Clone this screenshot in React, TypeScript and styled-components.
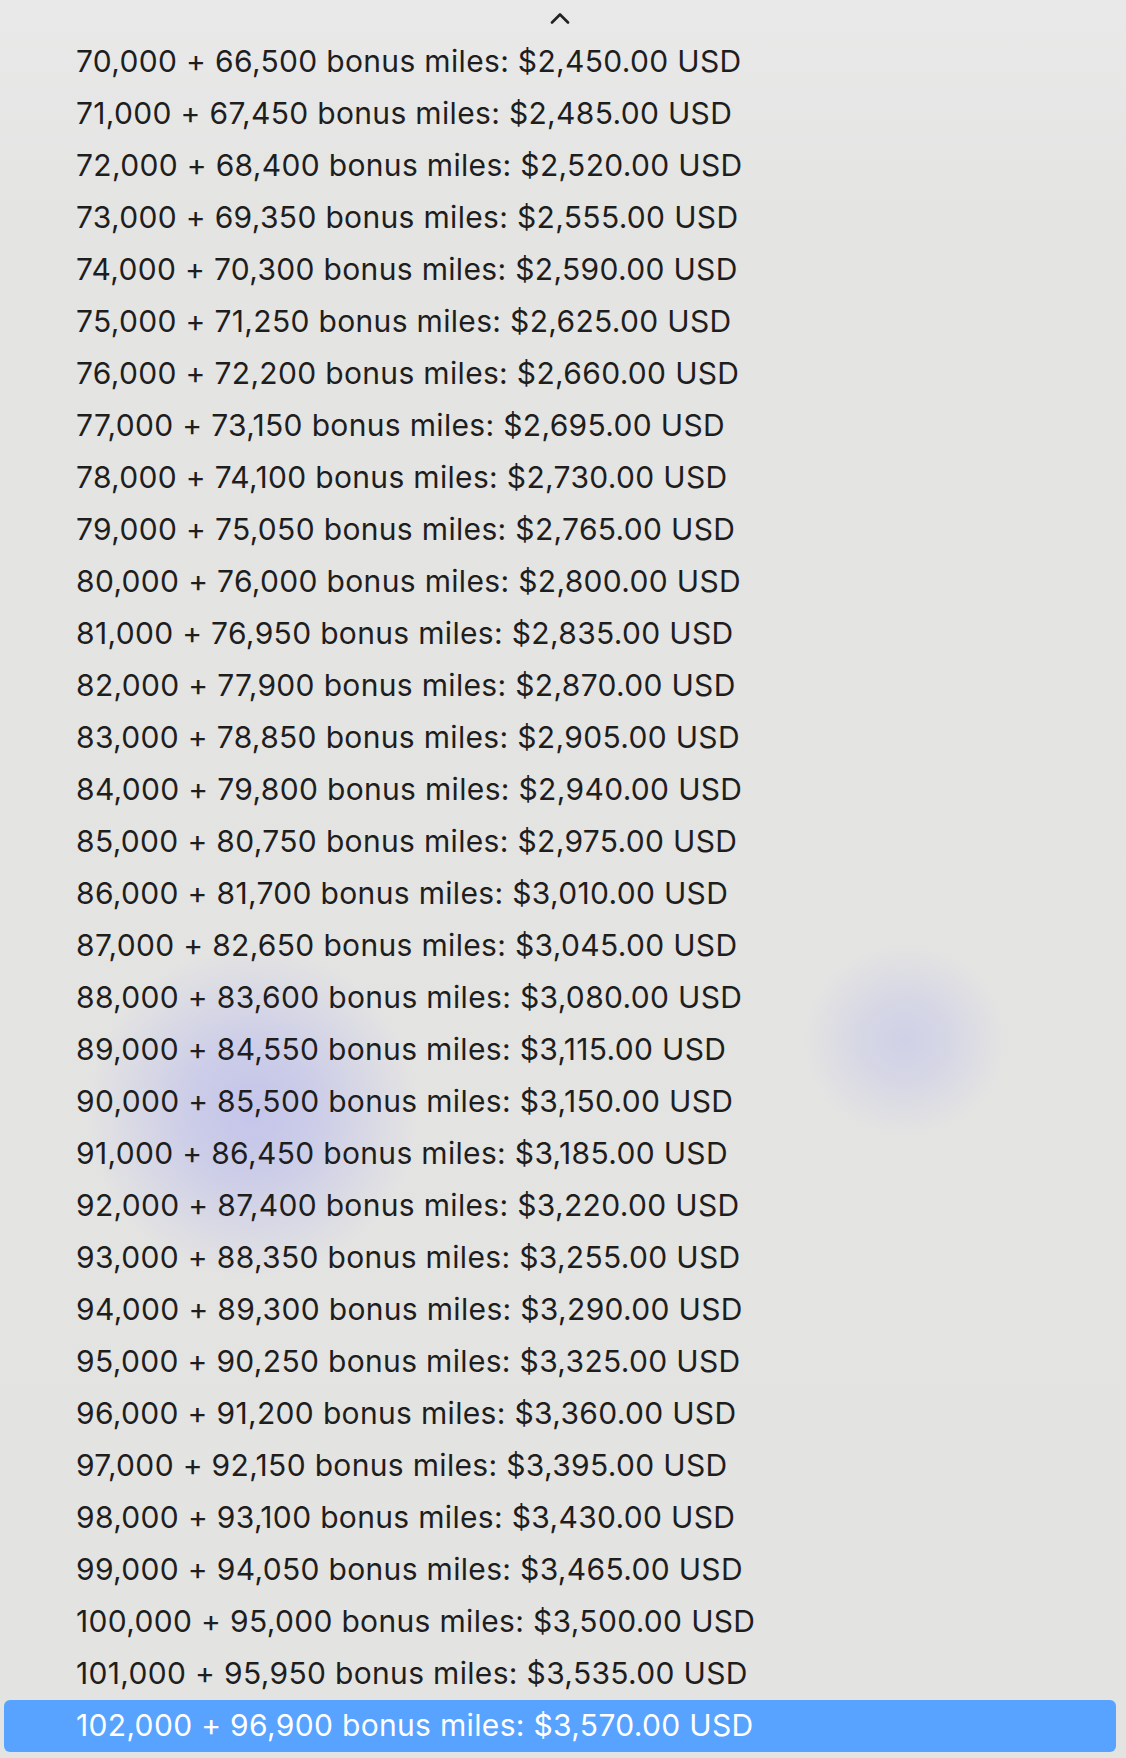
import styled, { createGlobalStyle } from 'styled-components';

const GlobalStyle = createGlobalStyle`
	html, body {
		margin: 0;
		padding: 0;
		background: #e4e4e3;
	}
	body {
		font-family: Inter, 'Noto Sans', sans-serif;
	}
`;

const Menu = styled.div`
	position: relative;
	width: 1126px;
	height: 1758px;
	box-sizing: border-box;
	padding: 0 10px 6px 4px;
	display: flex;
	flex-direction: column;
	background: linear-gradient(180deg, #e9e9e9 0%, #e4e4e3 12%, #e3e3e2 100%);
	overflow: hidden;
`;

const Glow = styled.div<{ $x: number; $y: number; $rx: number; $ry: number; $color: string }>`
	position: absolute;
	left: ${({ $x, $rx }) => $x - $rx}px;
	top: ${({ $y, $ry }) => $y - $ry}px;
	width: ${({ $rx }) => $rx * 2}px;
	height: ${({ $ry }) => $ry * 2}px;
	border-radius: 50%;
	background: radial-gradient(closest-side, ${({ $color }) => $color} 0%, ${({ $color }) => $color}bb 40%, ${({ $color }) => $color}44 78%, transparent 100%);
	pointer-events: none;
	z-index: 0;
`;

const ScrollUp = styled.div`
	height: 36px;
	display: flex;
	justify-content: center;
	align-items: center;
	position: relative;
	z-index: 1;
`;

const List = styled.ul`
	list-style: none;
	margin: 0;
	padding: 0;
	display: flex;
	flex-direction: column;
	position: relative;
	z-index: 1;
`;

const Option = styled.li<{ $selected?: boolean }>`
	height: 52px;
	box-sizing: border-box;
	padding: 0 0 2px 72px;
	display: flex;
	align-items: center;
	border-radius: 6px;
	font-family: Inter, 'Noto Sans', sans-serif;
	font-size: 30px;
	letter-spacing: 0.33px;
	color: ${({ $selected }) => ($selected ? '#ffffff' : '#1e1e1e')};
	background: ${({ $selected }) => ($selected ? '#58a3ff' : 'transparent')};
	white-space: nowrap;
`;

const fmt = (n: number) => n.toLocaleString('en-US');

const options = Array.from({ length: 33 }, (_, i) => {
	const miles = 70000 + i * 1000;
	const bonus = 66500 + i * 950;
	const price = 2450 + i * 35;
	return `${fmt(miles)} + ${fmt(bonus)} bonus miles: $${fmt(price)}.00 USD`;
});

const App = () => {
	return (
		<>
			<GlobalStyle />
			<Menu>
				<Glow $x={252} $y={1112} $rx={165} $ry={165} $color="#c4c5ea" />
				<Glow $x={905} $y={1040} $rx={100} $ry={94} $color="#d0d1e6" />
				<ScrollUp>
					<svg width="20" height="12" viewBox="0 0 20 12">
						<path d="M2 10.5 L10 2.5 L18 10.5" fill="none" stroke="#222" strokeWidth="2.6" strokeLinecap="round" strokeLinejoin="round" />
					</svg>
				</ScrollUp>
				<List>
					{options.map((text, i) => (
						<Option key={text} $selected={i === options.length - 1}>
							{text}
						</Option>
					))}
				</List>
			</Menu>
		</>
	);
};

export default App;
